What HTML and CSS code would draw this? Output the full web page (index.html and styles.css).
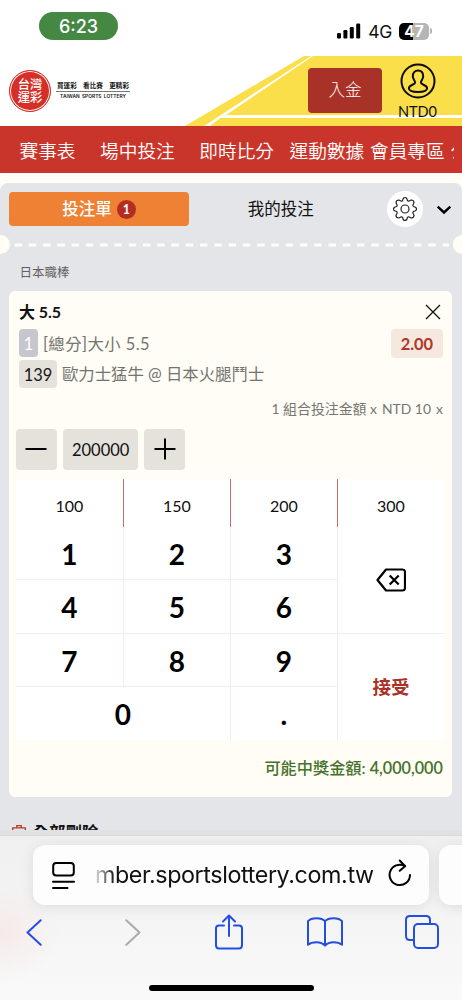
FILE: index.html
```html
<!DOCTYPE html>
<html lang="zh-Hant">
<head>
<meta charset="utf-8">
<meta name="viewport" content="width=device-width, initial-scale=1">
<title>台灣運彩</title>
<link rel="stylesheet" href="styles.css">
</head>
<body>
<div class="phone">
  <div class="status">
    <span class="clock">6:23</span>
    <div class="status-right">
      <svg class="signal" width="24" height="16" viewBox="0 0 24 16"><rect x="0" y="10" width="4" height="5.5" rx="1.2"/><rect x="6.4" y="7" width="4" height="8.5" rx="1.2"/><rect x="12.8" y="4" width="4" height="11.500" rx="1.2"/><rect x="19.200" y="0.500" width="4" height="15" rx="1.2"/></svg>
      <span class="network">4G</span>
      <span class="battery">47</span><i class="battery-tip"></i>
    </div>
  </div>

  <header class="header">
    <svg class="stripe" width="462" height="70" viewBox="0 0 462 70"><path d="M304 0H462V70H185Z" fill="#fade4a"/><path d="M311 0H313L226 59H462V62H220.500L210 70H204Z" fill="#fff"/></svg>
    <div class="brand">
      <div class="seal"><span>台灣</span><span>運彩</span></div>
      <div class="brand-text">
        <div class="slogan"><span>買運彩</span><span>看比賽</span><span>更精彩</span></div>
        <div class="latin">TAIWAN SPORTS LOTTERY</div>
      </div>
    </div>
    <button class="deposit">入金</button>
    <div class="account">
      <svg width="36" height="36" viewBox="0 0 36 36" fill="none" stroke="#0c0c08" stroke-width="2"><circle cx="18" cy="18" r="16.500"/><path d="M18 7.500c-3.300 0-5.200 2.400-5.200 5.700 0 2.900 2.300 4.400 2.300 6.400 0 2.400-6.200 1.900-6.200 5.700 0 2.600 4.300 3.700 9.100 3.700s9.100-1.100 9.100-3.700c0-3.800-6.200-3.300-6.200-5.700 0-2 2.300-3.500 2.300-6.400 0-3.300-1.900-5.700-5.200-5.700Z"/></svg>
      <span>NTD0</span>
    </div>
  </header>

  <nav class="nav"><a>賽事表</a><a>場中投注</a><a>即時比分</a><a>運動數據</a><a>會員專區</a><a>公益</a></nav>

  <main class="slip">
    <div class="tabs">
      <button class="tab-active">投注單 <b>1</b></button>
      <span class="tab">我的投注</span>
      <span class="gear"><svg width="26" height="26" viewBox="0 0 26 26" fill="none" stroke="#222" stroke-width="1.200" stroke-linejoin="round"><path d="M11.200 2.500Q13 .5 14.800 2.500L15.400 4.600Q16.200 5.500 17.200 5L19 4Q21.800 3.900 22 6.800L21 8.700Q20.600 9.800 21.400 10.500L23.500 11.200Q25.500 13 23.500 14.800L21.400 15.500Q20.500 16.200 21 17.300L22 19.200Q21.900 22 19 22L17.200 21Q16.100 20.600 15.400 21.400L14.800 23.500Q13 25.500 11.200 23.500L10.600 21.400Q9.900 20.500 8.800 21L6.900 22Q4.100 21.900 4 19.200L5 17.300Q5.500 16.200 4.600 15.500L2.500 14.800Q.5 13 2.500 11.200L4.600 10.500Q5.500 9.800 5 8.700L4 6.800Q4.100 4 6.900 4L8.800 5Q9.900 5.400 10.600 4.600Z"/><circle cx="13" cy="13" r="4"/></svg></span>
      <svg class="chevron" width="16" height="10" viewBox="0 0 16 10" fill="none" stroke="#000" stroke-width="2.400"><path d="m1.700 1.700 6.300 5.800 6.300-5.800"/></svg>
    </div>
    <div class="perforation"><i></i><svg width="443" height="4"><path d="M4.500 2H439" stroke="#fffdf5" stroke-width="3" stroke-dasharray="7.500 6.770"/></svg><i></i></div>
    <div class="league">日本職棒</div>

    <section class="bet">
      <div class="bet-head"><h2>大 5.5</h2><svg width="16" height="16" viewBox="0 0 16 16" stroke="#111" stroke-width="1.300" fill="none"><path d="m1 1 14 14M15 1 1 15"/></svg></div>
      <div class="market"><span class="index">1</span><span class="desc">[總分]大小 5.5</span><span class="odds">2.00</span></div>
      <div class="match"><span class="code">139</span><span class="teams">歐力士猛牛 @ 日本火腿鬥士</span></div>
      <div class="combo"><span>1 組合投注金額 x</span><span>NTD 10</span><span>x</span></div>
      <div class="stake">
        <button class="step"><svg width="22" height="22" stroke="#000" stroke-width="2"><path d="M.5 11h21"/></svg></button>
        <span class="amount">200000</span>
        <button class="step"><svg width="22" height="22" stroke="#000" stroke-width="2"><path d="M.5 11h21M11 .5v21"/></svg></button>
      </div>
      <div class="presets"><span>100</span><span>150</span><span>200</span><span>300</span></div>
      <div class="keys">
        <b class="first">1</b><b>2</b><b>3</b>
        <span class="erase"><svg width="30" height="24" viewBox="0 0 30 24" fill="none" stroke="#000" stroke-width="2.200" stroke-linejoin="round"><path d="M10 1.500H26.500Q29 1.500 29 4V20Q29 22.500 26.500 22.500H10L1.500 12Z"/><path d="m13.700 7.500 9 9m0-9-9 9"/></svg></span>
        <b class="first">4</b><b>5</b><b>6</b>
        <b class="first">7</b><b>8</b><b>9</b>
        <span class="accept">接受</span>
        <b class="first zero">0</b><b class="dot">.</b>
      </div>
      <div class="payout">可能中獎金額: <span>4,000,000</span></div>
    </section>

    <div class="clear"><svg width="14" height="14" viewBox="0 0 14 14" fill="none" stroke="#b43a2e" stroke-width="1.300"><path d="M.7 5.500V2.800H13.300V5.500M4.800 2.800V.7H9.200V2.800M2 5V13H12V5"/></svg><span>全部刪除</span></div>
  </main>

  <footer class="browser">
    <div class="address-row">
      <div class="address">
        <svg width="23" height="27" viewBox="0 0 23 27" fill="none" stroke="#000" stroke-width="2" stroke-linecap="round"><rect x="1.200" y="1" width="20.600" height="12.500" rx="3"/><path d="M1 19.700H22M1 26H15.500"/></svg>
        <span class="url">mber.sportslottery.com.tw</span>
        <svg class="reload" width="24" height="28" viewBox="0 0 24 28" fill="none" stroke="#000" stroke-width="2" stroke-linecap="round" stroke-linejoin="round"><path d="M22 16A10.200 10.200 0 1 1 16.800 7"/><path d="m11.700 1.500 5.400 5.700-5.400 4.600"/></svg>
      </div>
      <div class="next-tab"></div>
    </div>
    <div class="tools">
      <svg width="16" height="27" viewBox="0 0 16 27"><path d="M14.700 1.200 1.500 13.500 14.700 25.800"/></svg>
      <svg width="16" height="27" viewBox="0 0 16 27"><path class="disabled" d="M1.300 1.200 14.500 13.500 1.300 25.800"/></svg>
      <svg width="28" height="36" viewBox="0 0 28 36"><path d="M9 11.500H4Q1 11.500 1 14.500V31Q1 34.500 4 34.500H24Q27 34.500 27 31V14.500Q27 11.500 24 11.500H19M14 22V1.500M8 7.500 14 1.500 20 7.500"/></svg>
      <svg width="36" height="30" viewBox="0 0 36 30"><path d="M18 4.200Q15.500 1.200 9.500 1.200T1 4.200V27.800Q4 25.200 9.500 25.200T18 28.500V4.200Q20.500 1.200 26.500 1.200T35 4.200V27.800Q32 25.200 26.500 25.200T18 28.500"/></svg>
      <svg width="34" height="34" viewBox="0 0 34 34"><rect x="9" y="9" width="24" height="24" rx="4"/><path d="M9 25H5Q1 25 1 21V5Q1 1 5 1H21Q25 1 25 5V9"/></svg>
    </div>
    <div class="home"></div>
  </footer>
</div>
</body>
</html>
```
FILE: styles.css
```css
* { box-sizing: border-box; }
body { margin: 0; background: #fff; }
button { border: 0; padding: 0; font: inherit; }
svg { flex: none; display: block; }
.phone { width: 462px; height: 1000px; overflow: hidden; display: flex; flex-direction: column; background: #fffdf5; color: #111; font-family: Lato, "Noto Sans CJK TC", sans-serif; white-space: nowrap; }

.status { height: 56px; flex: none; background: #fff; display: flex; align-items: flex-start; justify-content: space-between; padding: 12px 32px 0 39px; font-family: Inter, sans-serif; }
.clock { width: 79px; height: 28px; border-radius: 14px; background: #448844; color: #fff; font-size: 18px; font-weight: 500; line-height: 29px; text-align: center; }
.status-right { display: flex; align-items: center; padding-top: 10px; height: 28px; }
.network { font-size: 17.500px; letter-spacing: -.3px; line-height: 20px; margin: 1px 7px 0 7px; }
.battery { width: 30px; height: 17px; border-radius: 5px; background: linear-gradient(90deg, #000 47%, #b5b5b5 47%); color: #fff; font-size: 15.500px; font-weight: 700; line-height: 17px; text-align: center; }
.battery-tip { width: 2px; height: 6px; border-radius: 0 2px 2px 0; background: #b5b5b5; margin: 0 -2px 0 1px; }
.signal { margin-top: -1px; }

.header { height: 69.500px; flex: none; position: relative; display: flex; padding-right: 24.500px; background: #fff; overflow: hidden; }
.stripe { position: absolute; left: 0; top: 0; }
.brand { display: flex; flex: 1; position: relative; padding: 13.500px 0 0 9px; }
.seal { width: 42px; height: 42px; border-radius: 50%; background: #d62f28; border: 1px solid #d62f28; box-shadow: inset 0 0 0 1px #fff; display: flex; flex-direction: column; align-items: center; justify-content: center; color: #fff; font: 500 12.300px/13px "Noto Sans CJK TC", sans-serif; }
.brand-text { margin: 9px 0 0 5px; width: 74px; }
.slogan { display: flex; justify-content: space-between; padding: 0 1px; border-bottom: 1px solid #777; height: 13px; font: 700 6.600px/12px "Noto Sans CJK TC", sans-serif; }
.latin { font: 600 4.800px/9px Inter, sans-serif; text-align: center; letter-spacing: .05px; word-spacing: 1px; }
.deposit { position: relative; width: 74px; height: 45px; margin-top: 12px; border-radius: 4px; background: #a83227; color: #fff; font-size: 16.500px; font-weight: 300; line-height: 45px; }
.account { position: relative; width: 40px; margin-left: 15.500px; padding-top: 7px; display: flex; flex-direction: column; align-items: center; font-size: 14.500px; line-height: 20px; }
.account span { margin-top: 3px; }

.nav { height: 47.500px; flex: none; background: #ca352b; color: #fff; display: flex; padding-left: 19.500px; overflow: hidden; font: 350 18.700px/48px "Noto Sans CJK TC", sans-serif; width: 454px; box-shadow: 8px 0 #ca352b; }
.nav a { margin-right: 24.500px; }
.nav a:nth-child(3) { margin-right: 15.500px; }
.nav a:nth-child(4), .nav a:nth-child(5) { margin-right: 5.700px; }

.slip { height: 647px; flex: none; margin-top: 10px; background: #e3e5e8; border-radius: 8px 8px 0 0; overflow: hidden; display: flex; flex-direction: column; }
.tabs { height: 52px; flex: none; display: flex; align-items: center; padding: 0 10px 0 9.300px; }
.tab-active { width: 179.500px; height: 34px; border-radius: 4px; background: #ee8133; color: #fff; font-size: 16.500px; font-weight: 500; display: flex; justify-content: center; align-items: center; gap: 5px; line-height: 32px; }
.tab-active b { width: 19px; height: 19px; border-radius: 50%; background: #b42d22; font-size: 12.500px; line-height: 19px; }
.tab { width: 198px; text-align: center; font-size: 16.500px; padding-right: 14px; line-height: 32px; }
.gear { width: 36px; height: 36px; border-radius: 50%; background: #fff; display: grid; place-items: center; }
.chevron { margin-left: 13px; margin-top: 2px; }
.perforation { height: 19px; flex: none; display: flex; align-items: center; justify-content: space-between; }
.perforation i { width: 9.500px; height: 19px; flex: none; border-radius: 0 10px 10px 0; background: #fffdf5; }
.perforation i:last-child { border-radius: 10px 0 0 10px; }
.league { height: 36.500px; flex: none; padding-left: 19.500px; font-size: 12.500px; line-height: 37px; color: #606163; }

.bet { width: 443px; height: 506px; flex: none; margin-left: 9.400px; border-radius: 6px; background: #fffdf5; display: flex; flex-direction: column; padding: 8.500px 9.500px 0 6.500px; }
.bet-head { display: flex; justify-content: space-between; align-items: center; height: 25px; padding: 0 2px 0 3px; }
.bet-head h2 { margin: 0; font-size: 16px; font-weight: 700; line-height: 23px; }
.market, .match { display: flex; align-items: center; padding-left: 3px; height: 29px; margin-top: 4.500px; font-size: 16.400px; color: #74746f; line-height: 28px; }
.match { height: 28px; margin-top: 2px; }
.index { width: 19px; height: 28px; border-radius: 4px; background: #c7c6cc; color: #fff; text-align: center; margin-right: 5px; line-height: 30px; }
.market .desc { letter-spacing: .45px; margin-top: 2px; }
.odds { width: 52px; height: 29px; border-radius: 4px; background: #f5e8df; color: #b0362a; font-weight: 700; text-align: center; margin-left: auto; line-height: 30px; }
.code { width: 38px; height: 28px; border-radius: 4px; background: #e5e2dc; color: #151515; text-align: center; margin-right: 5px; line-height: 29px; }
.teams { margin-top: 1px; }
.combo { height: 41px; display: flex; justify-content: flex-end; gap: 5px; font-size: 13.900px; line-height: 41px; color: #777672; }
.stake { display: flex; gap: 6px; height: 41px; }
.step, .amount { height: 41px; width: 41px; border-radius: 4px; background: #e5e2dc; display: grid; place-items: center; font-size: 16.500px; }
.amount { width: 75.500px; line-height: 42px; }
.presets { margin-top: 9.500px; height: 48px; flex: none; display: grid; grid-template-columns: repeat(4, 107px); background: #fff; }
.presets span { text-align: center; line-height: 54px; font-size: 16px; border-left: 1px solid #c96f69; }
.presets span:first-child { border: 0; }
.keys { height: 213px; flex: none; display: grid; grid-template: repeat(4, 53.250px) / repeat(4, 107px); background: #fff; }
.keys > * { border-left: 1px solid #f5ebea; border-bottom: 1px solid #f5ebea; font-size: 28px; line-height: 54px; text-align: center; color: #000; }
.keys .first { border-left: 0; }
.keys .erase { grid-row: 1 / 3; grid-column: 4; display: grid; place-items: center; }
.keys .accept { grid-row: 3 / 5; grid-column: 4; border-bottom: 0; color: #aa3328; font-size: 18.500px; font-weight: 700; line-height: 106px; }
.keys .zero { grid-column: span 2; border-bottom: 0; }
.keys .dot { border-bottom: 0; }
.payout { height: 56px; text-align: right; color: #447229; font-size: 16.200px; font-weight: 500; line-height: 56px; }
.payout span { font-weight: 600; }
.clear { display: flex; gap: 7px; padding: 28px 0 0 11.500px; font: 700 16.500px/24px "Noto Sans CJK TC", sans-serif; }
.clear span { margin-top: -5px; }

.browser { flex: 1; min-height: 0; margin-top: 5px; box-shadow: 0 -5px #e0e1e4; border-top: 1px solid #d9dadc; background: radial-gradient(ellipse 60px 50px at 0 95px, #f6eae8, transparent), linear-gradient(#f0f0f1, #f9f9f9); position: relative; }
.address-row { display: flex; gap: 10px; padding: 9px 0 0 33px; }
.address { width: 395.500px; flex: none; height: 60px; border-radius: 12px; background: #fdfdfd; box-shadow: 0 2px 14px #00000018; display: flex; align-items: center; padding: 0 17px 0 19px; }
.url { font: 400 23.300px/32px Inter, sans-serif; letter-spacing: -.4px; margin: 0 auto 0 20px; background: linear-gradient(90deg, #ddd, #111 20px); background-clip: text; color: transparent; }
.reload { margin-top: -4px; }
.next-tab { width: 60px; height: 60px; flex: none; border-radius: 12px; background: #fdfdfd; box-shadow: 0 2px 14px #00000018; }
.tools { display: grid; grid-template-columns: 68px 130px 62px 130px 64px; justify-items: center; align-items: center; height: 54px; fill: none; stroke: #244ee0; stroke-width: 2; stroke-linecap: round; stroke-linejoin: round; }
.disabled { stroke: #aaa; }
.home { width: 165px; height: 6px; border-radius: 3px; margin: 26px auto 0; background: #000; }
```
